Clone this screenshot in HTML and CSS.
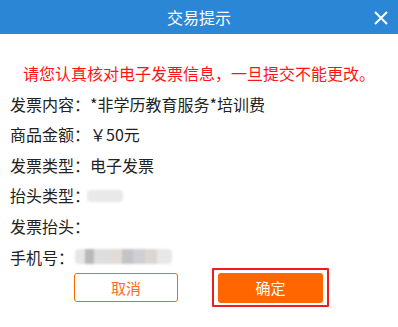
FILE: index.html
```html
<!DOCTYPE html>
<html lang="zh-CN">
<head>
    <meta charset="UTF-8">
    <meta name="viewport" content="width=device-width, initial-scale=1.0">
    <title>交易提示</title>
    <link rel="stylesheet" href="styles.css">
</head>
<body>
    <div class="dialog">
        <div class="dialog-header">
            <span></span>
            <span class="dialog-title">交易提示</span>
            <span class="dialog-close">
                <svg width="14" height="14" viewBox="0 0 14 14">
                    <path d="M1 1 L13 13 M13 1 L1 13" stroke="#fff" stroke-width="2" fill="none"/>
                </svg>
            </span>
        </div>

        <div class="dialog-body">
            <div class="warning">请您认真核对电子发票信息，一旦提交不能更改。</div>
            <div class="info-row"><span class="label">发票内容：</span>*非学历教育服务*培训费</div>
            <div class="info-row"><span class="label">商品金额：</span>￥50元</div>
            <div class="info-row"><span class="label">发票类型：</span>电子发票</div>
            <div class="info-row"><span class="label">抬头类型：</span><span class="masked masked-short"></span></div>
            <div class="info-row"><span class="label">发票抬头：</span></div>
            <div class="info-row"><span class="label">手机号：</span><span class="masked masked-phone"></span></div>
        </div>

        <div class="dialog-actions">
            <button class="btn btn-cancel">取消</button>
            <span class="highlight"><button class="btn btn-confirm">确定</button></span>
        </div>
    </div>
</body>
</html>
```

FILE: styles.css
```css
:root {
    --header-blue: #2b86d6;
    --orange: #ff6600;
    --warn-red: #ff1414;
    --text-color: #222;
}

* {
    box-sizing: border-box;
    margin: 0;
    padding: 0;
}

body {
    font-family: "Noto Sans CJK SC", "Noto Sans", sans-serif;
    background: #fff;
    color: var(--text-color);
}

.dialog {
    width: 398px;
    height: 327px;
    background: #fff;
}

.dialog-header {
    height: 34px;
    background: var(--header-blue);
    display: grid;
    grid-template-columns: 1fr auto 1fr;
    align-items: center;
    color: #fff;
}

.dialog-title {
    font-size: 16px;
    line-height: 20px;
}

.dialog-close {
    justify-self: end;
    padding-right: 10px;
    display: flex;
    padding-top: 1px;
}

.dialog-body {
    padding-top: 28px;
    display: flex;
    flex-direction: column;
    gap: 8.6px;
    font-size: 16px;
}

.warning {
    color: var(--warn-red);
    text-align: center;
    line-height: 22px;
}

.info-row {
    height: 22px;
    line-height: 22px;
    padding-left: 10px;
    display: flex;
    align-items: center;
    white-space: nowrap;
}

.masked {
    display: inline-block;
    border-radius: 4px;
    filter: blur(1px);
}

.masked-short {
    width: 36px;
    height: 12px;
    margin-left: -3px;
    margin-top: 2px;
    background: #e9e9e9;
}

.masked-phone {
    width: 97px;
    height: 15px;
    margin-left: 1px;
    background: linear-gradient(90deg,
        #e6e6e6 0 10%, #b9b9b9 10% 20%, #dedede 20% 38%,
        #e2dcd6 38% 48%, #c2c4c8 48% 60%, #d0cfd4 60% 72%,
        #dcd6d2 72% 85%, #e8e8e8 85% 100%);
}

.dialog-actions {
    margin-top: 0;
    padding-left: 5px;
    display: flex;
    justify-content: center;
    align-items: center;
    gap: 34px;
}

.btn {
    font-family: inherit;
    font-size: 15px;
    border-radius: 3px;
    cursor: pointer;
}

.btn-cancel {
    width: 104px;
    height: 29px;
    background: #fff;
    border: 1px solid var(--orange);
    color: #ff6a1a;
}

.highlight {
    display: flex;
    border: 2px solid #f21c1c;
    border-radius: 1px;
    padding: 3px 4px 2px;
}

.btn-confirm {
    width: 105px;
    height: 30px;
    background: var(--orange);
    border: none;
    color: #fff;
}
```
